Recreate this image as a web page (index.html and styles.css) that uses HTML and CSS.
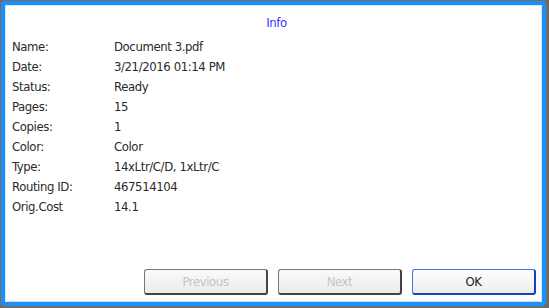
FILE: index.html
```html
<!DOCTYPE html>
<html lang="en">
	<head>
		<meta charset="UTF-8" />
		<title>Info</title>
		<link rel="stylesheet" href="styles.css">
	</head>
	<body>
		<div class="dialog">
			<div class="inner">
				<h1 class="title">Info</h1>
				<div class="details">
					<div class="row"><span class="label">Name:</span><span class="value">Document 3.pdf</span></div>
					<div class="row"><span class="label">Date:</span><span class="value">3/21/2016 01:14 PM</span></div>
					<div class="row"><span class="label">Status:</span><span class="value">Ready</span></div>
					<div class="row"><span class="label">Pages:</span><span class="value">15</span></div>
					<div class="row"><span class="label">Copies:</span><span class="value">1</span></div>
					<div class="row"><span class="label">Color:</span><span class="value">Color</span></div>
					<div class="row"><span class="label">Type:</span><span class="value">14xLtr/C/D, 1xLtr/C</span></div>
					<div class="row"><span class="label">Routing ID:</span><span class="value">467514104</span></div>
					<div class="row"><span class="label">Orig.Cost</span><span class="value">14.1</span></div>
				</div>
				<div class="buttons">
					<button class="btn" disabled>Previous</button>
					<button class="btn" disabled>Next</button>
					<button class="btn primary">OK</button>
				</div>
			</div>
		</div>
	</body>
</html>
```

FILE: styles.css
```css
html, body {
	margin: 0;
	height: 100%;
	background-color: #6a6a6a;
}
body {
	font-family: "DejaVu Sans Condensed", "DejaVu Sans", sans-serif;
	font-stretch: condensed;
	font-size: 13px;
	letter-spacing: -0.4px;
	color: #2a2a2a;
}
.dialog {
	width: 547px;
	height: 307px;
	box-sizing: border-box;
	border: 1px solid #707070;
	border-radius: 5px;
	background-color: #1e90f5;
	padding: 4px;
}
.inner {
	height: 100%;
	box-sizing: border-box;
	background-color: #fff;
	border: 1px solid #cfe6fb;
	display: flex;
	flex-direction: column;
	padding: 0 0 0 6px;
}
.title {
	margin: 10px 0 0 0;
	font-size: 13px;
	font-weight: normal;
	color: #3535ff;
	text-align: center;
	line-height: 14px;
}
.details {
	margin-top: 7px;
}
.row {
	display: flex;
	height: 20px;
	line-height: 20px;
}
.label {
	width: 102px;
}
.buttons {
	margin-top: auto;
	display: flex;
	justify-content: flex-end;
	gap: 10px;
	padding: 0 5px 6px 0;
}
.btn {
	width: 124px;
	height: 26px;
	font-family: inherit;
	font-stretch: condensed;
	font-size: 13px;
	letter-spacing: -0.4px;
	color: #222;
	background: linear-gradient(#ffffff, #ececec);
	border: 1px solid #777;
	border-right: 2px solid #444;
	border-bottom: 2px solid #444;
	border-radius: 3px;
}
.btn:disabled {
	color: #c4c4c4;
	background: linear-gradient(#fafafa, #ebebeb);
}
.primary {
	border-color: #3a7af0;
	border-right-color: #1a3fc0;
	border-bottom-color: #1a3fc0;
}
```
